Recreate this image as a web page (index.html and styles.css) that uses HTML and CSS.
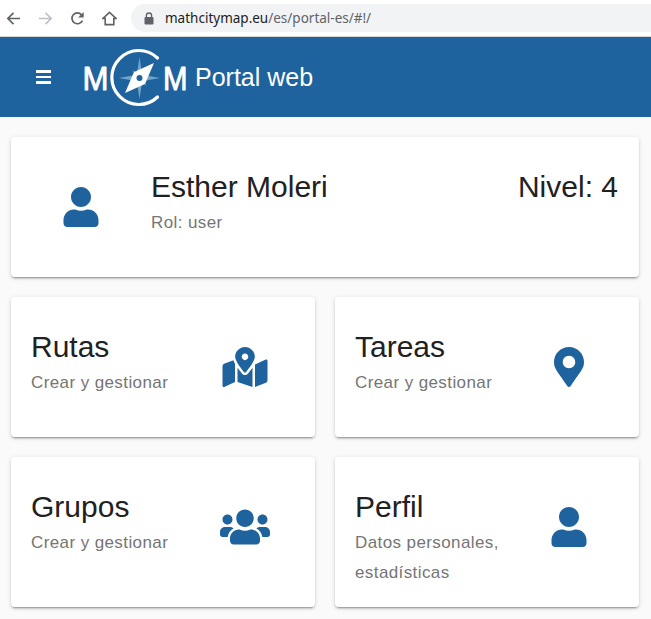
FILE: index.html
```html
<!DOCTYPE html>
<html lang="es">
<head>
  <meta charset="UTF-8">
  <meta name="viewport" content="width=device-width, initial-scale=1.0">
  <title>Portal web - MathCityMap</title>
  <link rel="stylesheet" href="styles.css">
</head>
<body>
  <!-- barra del navegador -->
  <div class="browser-bar">
    <svg class="nav-icon" viewBox="0 0 16 16"><path d="M15 8H2M8 2 2 8l6 6" fill="none" stroke="#5f6368" stroke-width="1.8"/></svg>
    <svg class="nav-icon" viewBox="0 0 16 16"><path d="M1 8h13M8 2l6 6-6 6" fill="none" stroke="#bdc1c6" stroke-width="1.8"/></svg>
    <svg class="nav-icon" viewBox="0 0 16 16"><path d="M13.2 10.2A5.8 5.8 0 1 1 12.3 4" fill="none" stroke="#5f6368" stroke-width="1.8"/><path d="M14.6 1v6h-6z" fill="#5f6368"/></svg>
    <svg class="nav-icon" viewBox="0 0 16 16"><path d="M8 1.5 1 8h2.4v6.5h9.2V8H15z" fill="none" stroke="#5f6368" stroke-width="1.7"/></svg>
    <div class="url-pill">
      <svg class="lock" viewBox="0 0 10 13"><path d="M2.4 5V3.6a2.6 2.6 0 0 1 5.2 0V5" fill="none" stroke="#5f6368" stroke-width="1.3"/><rect x="0.5" y="5" width="9" height="7.5" rx="1" fill="#5f6368"/></svg>
      <span class="url"><b>mathcitymap.eu</b>/es/portal-es/#!/</span>
    </div>
  </div>

  <header class="app-header">
    <div class="burger"><i></i><i></i><i></i></div>
    <svg class="logo" viewBox="0 0 106 57">
      <path d="M57.500 8 60 24.500 65 21 61.500 26 78 29 61.500 32 65 37 60 33.500 57.500 50 55 33.500 50 37 53.500 32 37 29 53.500 26 50 21 55 24.500z" fill="#6fa5c9"/>
      <path d="M75.500 9A27 27 0 1 0 75.500 48" fill="none" stroke="#fff" stroke-width="3.200" stroke-linecap="round"/>
      <path d="M72 14 63 35 43 44 52 23z" fill="#fff"/>
      <circle cx="57.500" cy="29" r="3" fill="#1f639e"/>
      <text class="logo-m" x="0.500" y="41" textLength="26" lengthAdjust="spacingAndGlyphs">M</text>
      <text class="logo-m" x="81" y="41" textLength="24.500" lengthAdjust="spacingAndGlyphs">M</text>
    </svg>
    <span class="app-title">Portal web</span>
  </header>

  <main class="content">
    <section class="card card-wide">
      <div class="card-icon">
        <svg viewBox="0 0 448 512" width="36" height="40"><path d="M224 256c70.700 0 128-57.300 128-128S294.700 0 224 0 96 57.300 96 128s57.300 128 128 128zm89.600 32h-16.700c-22.200 10.200-46.900 16-72.900 16s-50.600-5.800-72.900-16h-16.700C60.200 288 0 348.200 0 422.400V464c0 26.500 21.500 48 48 48h352c26.500 0 48-21.500 48-48v-41.600c0-74.200-60.200-134.400-134.400-134.400z"/></svg>
      </div>
      <div class="card-text">
        <h2>Esther Moleri</h2>
        <p>Rol: user</p>
      </div>
      <div class="level">Nivel: 4</div>
    </section>

    <div class="card-grid">
      <section class="card">
        <div class="card-text">
          <h2>Rutas</h2>
          <p>Crear y gestionar</p>
        </div>
        <div class="card-icon">
          <svg viewBox="0 0 576 512" width="46" height="40"><path d="M288 0c-69.590 0-126 56.410-126 126 0 56.260 82.350 158.800 113.900 196.020 6.390 7.540 17.820 7.540 24.200 0C331.650 284.800 414 182.260 414 126 414 56.410 357.590 0 288 0zm0 168c-23.200 0-42-18.800-42-42s18.800-42 42-42 42 18.800 42 42-18.800 42-42 42zM20.120 215.950A32.006 32.006 0 0 0 0 245.660v250.320c0 11.320 11.430 19.060 21.940 14.860L160 448V214.920c-8.840-15.980-16.070-31.540-21.250-46.420L20.120 215.950zM288 359.670c-14.070 0-27.380-6.180-36.510-16.960-19.660-23.200-40.570-49.620-59.490-76.720V448l192 64V266c-18.920 27.090-39.820 53.520-59.490 76.720-9.130 10.770-22.440 16.950-36.510 16.950zm266.060-198.510L416 224v288l139.880-55.950A31.996 31.996 0 0 0 576 426.340V176.020c0-11.320-11.430-19.060-21.940-14.860z"/></svg>
        </div>
      </section>
      <section class="card">
        <div class="card-text">
          <h2>Tareas</h2>
          <p>Crear y gestionar</p>
        </div>
        <div class="card-icon">
          <svg viewBox="0 0 384 512" width="30" height="40"><path d="M172.268 501.670C26.970 291.031 0 269.413 0 192 0 85.961 85.961 0 192 0s192 85.961 192 192c0 77.413-26.970 99.031-172.268 309.670-9.535 13.774-29.930 13.773-39.464 0zM192 272c44.183 0 80-35.817 80-80s-35.817-80-80-80-80 35.817-80 80 35.817 80 80 80z"/></svg>
        </div>
      </section>
      <section class="card">
        <div class="card-text">
          <h2>Grupos</h2>
          <p>Crear y gestionar</p>
        </div>
        <div class="card-icon">
          <svg viewBox="0 0 640 512" width="50" height="40"><path d="M96 224c35.300 0 64-28.700 64-64s-28.700-64-64-64-64 28.700-64 64 28.700 64 64 64zm448 0c35.300 0 64-28.700 64-64s-28.700-64-64-64-64 28.700-64 64 28.700 64 64 64zm32 32h-64c-17.600 0-33.500 7.100-45.100 18.600 40.300 22.100 68.900 62 75.100 109.400h66c17.700 0 32-14.300 32-32v-32c0-35.300-28.700-64-64-64zm-256 0c61.900 0 112-50.100 112-112S381.900 32 320 32 208 82.100 208 144s50.100 112 112 112zm76.800 32h-8.300c-20.800 10-43.900 16-68.500 16s-47.600-6-68.500-16h-8.300C179.600 288 128 339.600 128 403.200V432c0 26.500 21.500 48 48 48h288c26.500 0 48-21.500 48-48v-28.800c0-63.600-51.600-115.200-115.200-115.200zm-223.700-13.400C161.500 263.100 145.600 256 128 256H64c-35.300 0-64 28.700-64 64v32c0 17.700 14.300 32 32 32h65.900c6.300-47.400 34.900-87.300 75.200-109.400z"/></svg>
        </div>
      </section>
      <section class="card">
        <div class="card-text">
          <h2>Perfil</h2>
          <p>Datos personales, estadísticas</p>
        </div>
        <div class="card-icon">
          <svg viewBox="0 0 448 512" width="36" height="40"><path d="M224 256c70.700 0 128-57.300 128-128S294.700 0 224 0 96 57.300 96 128s57.300 128 128 128zm89.600 32h-16.700c-22.200 10.200-46.900 16-72.900 16s-50.600-5.800-72.900-16h-16.700C60.200 288 0 348.200 0 422.400V464c0 26.500 21.500 48 48 48h352c26.500 0 48-21.500 48-48v-41.600c0-74.200-60.200-134.400-134.400-134.400z"/></svg>
        </div>
      </section>
    </div>
  </main>
</body>
</html>
```

FILE: styles.css
```css
body {
  margin: 0;
  font-family: 'Liberation Sans', sans-serif;
  background-color: #fafafa;
  color: #212121;
}
.browser-bar {
  display: flex;
  align-items: center;
  height: 36px;
  padding-left: 6px;
  background: white;
  border-bottom: 1px solid #d4d5d6;
  overflow: hidden;
}
.nav-icon {
  width: 15px;
  height: 15px;
  margin-right: 17px;
  flex: none;
}
.url-pill {
  display: flex;
  align-items: center;
  flex: 1;
  height: 28px;
  margin-left: -3px;
  margin-right: -20px;
  padding-left: 13px;
  background: #f1f3f4;
  border-radius: 14px;
}
.lock {
  width: 10px;
  height: 13px;
  margin-right: 11px;
}
.url {
  font-family: 'Noto Sans', sans-serif;
  font-size: 13.500px;
  color: #5f6368;
}
.url b {
  font-weight: 400;
  color: #202124;
}
.app-header {
  display: flex;
  align-items: center;
  height: 80px;
  padding-left: 36px;
  background-color: #1f639e;
  color: white;
}
.burger {
  display: flex;
  flex-direction: column;
  gap: 3px;
  width: 15px;
  margin-right: 31px;
}
.burger i {
  display: block;
  height: 2.500px;
  background: white;
}
.logo {
  width: 106px;
  height: 57px;
  margin-right: 7px;
  overflow: visible;
}
.logo-m {
  font-family: 'Liberation Sans', sans-serif;
  font-size: 34px;
  fill: white;
  stroke: white;
  stroke-width: 0.900px;
  stroke-linejoin: round;
}
.app-title {
  font-size: 25px;
}
.content {
  padding: 20px 12px 12px 11px;
}
.card {
  display: flex;
  justify-content: space-between;
  min-height: 140px;
  background: white;
  border-radius: 4px;
  box-shadow: 0 2px 2px rgba(0, 0, 0, 0.14), 0 3px 1px -2px rgba(0, 0, 0, 0.2), 0 1px 5px rgba(0, 0, 0, 0.12);
}
.card-wide {
  justify-content: flex-start;
  margin-bottom: 20px;
}
.card-grid {
  display: grid;
  grid-template-columns: 1fr 1fr;
  gap: 20px;
}
.card-text {
  padding: 30px 0 19px 20px;
}
.card-wide .card-text {
  flex: 1;
  padding-left: 0;
}
.card h2 {
  margin: 0 0 1px;
  font-size: 30px;
  font-weight: 400;
  line-height: 40px;
}
.card p {
  margin: 0;
  font-size: 17px;
  line-height: 30px;
  letter-spacing: 0.4px;
  color: #757575;
}
.card-icon {
  display: flex;
  align-items: center;
  justify-content: center;
  flex: none;
  width: 140px;
  height: 140px;
}
.card-icon svg {
  fill: #1f639e;
}
.level {
  padding: 30px 21px 0 0;
  font-size: 30px;
  line-height: 40px;
}
```
